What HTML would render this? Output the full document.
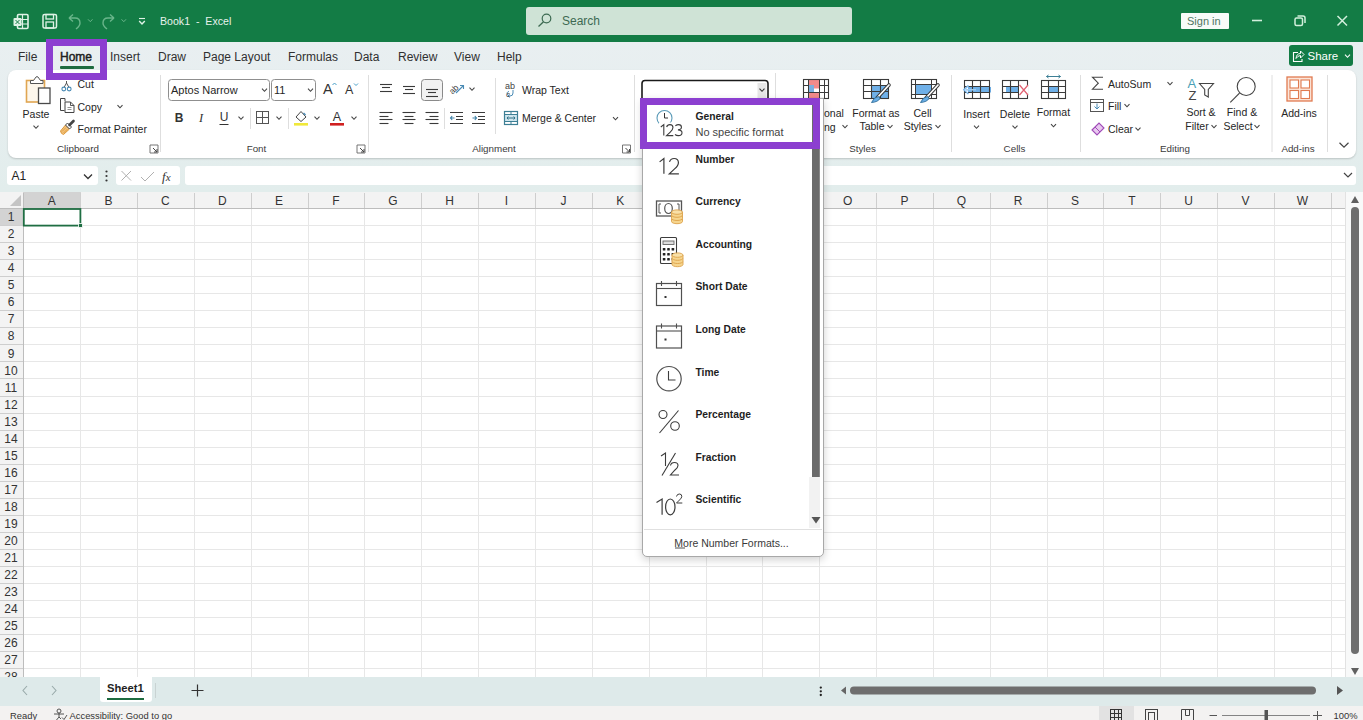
<!DOCTYPE html>
<html><head><meta charset="utf-8">
<style>
*{margin:0;padding:0;box-sizing:border-box}
html,body{width:1363px;height:720px;overflow:hidden;background:linear-gradient(#e9eff1 42px,#e2edec 190px);font-family:"Liberation Sans",sans-serif;color:#262626}
.a{position:absolute}
.t{position:absolute;white-space:nowrap;line-height:1}
svg{position:absolute;overflow:visible}
#title{left:0;top:0;width:1363px;height:42px;background:#137c45}
#tabs{left:0;top:42px;width:1363px;height:29px}
#ribbon{left:8px;top:70px;width:1348px;height:88px;background:#fff;border-radius:8px;box-shadow:0 1px 2px rgba(0,0,0,0.18)}
.sep{position:absolute;width:1px;background:#dcdcdc}
.rt{font-size:10.5px;color:#262626}
.gl{font-size:10px;color:#3a3a3a}
.dd{position:absolute;width:6px;height:4px}
</style></head><body>
<!-- TITLE BAR -->
<div id="title" class="a">
  <div class="a" style="left:526px;top:7px;width:326px;height:28px;background:#cfe3d6;border-radius:3px"></div>
  <div class="t" style="left:562px;top:15px;font-size:12px;color:#3d6a52">Search</div>
  <div class="t" style="left:160px;top:16px;font-size:10.6px;color:#e8f2ec">Book1&nbsp; - &nbsp;Excel</div>
  <div class="a" style="left:1180.5px;top:12.8px;width:48.3px;height:16.5px;background:#f7fbf8;border-radius:1px"></div>
  <div class="t" style="left:1187px;top:15.5px;font-size:11px;color:#4f7562">Sign in</div>
</div>
<!-- TABS -->
<div id="tabs" class="a">
  <div class="t" style="left:18px;top:9px;font-size:12px;color:#303030">File</div>
  <div class="t" style="left:60px;top:9px;font-size:12px;color:#202020;-webkit-text-stroke:0.45px #202020">Home</div>
  <div class="a" style="left:60px;top:24px;width:34px;height:3px;background:#1d6b3f;border-radius:1px"></div>
  <div class="t" style="left:110px;top:9px;font-size:12px;color:#303030">Insert</div>
  <div class="t" style="left:158px;top:9px;font-size:12px;color:#303030">Draw</div>
  <div class="t" style="left:203px;top:9px;font-size:12px;color:#303030">Page Layout</div>
  <div class="t" style="left:288px;top:9px;font-size:12px;color:#303030">Formulas</div>
  <div class="t" style="left:354px;top:9px;font-size:12px;color:#303030">Data</div>
  <div class="t" style="left:398px;top:9px;font-size:12px;color:#303030">Review</div>
  <div class="t" style="left:454px;top:9px;font-size:12px;color:#303030">View</div>
  <div class="t" style="left:497px;top:9px;font-size:12px;color:#303030">Help</div>
  <div class="a" style="left:1289px;top:3px;width:64px;height:21px;background:#137c45;border-radius:3px"></div>
  <div class="t" style="left:1307.5px;top:8.5px;font-size:11.5px;color:#fff">Share</div>
</div>
<!-- RIBBON -->
<div id="ribbon" class="a"></div>
<svg class="a" style="left:0;top:0" width="1363" height="720"><rect x="26.5" y="80.5" width="18" height="21.5" fill="#fdf7ec" stroke="#e0a652" stroke-width="1.6"/><path d="M30.5,83.5 L30.5,80.5 L33.5,80.5 L36,77 Q37,76.2 38,77 L40.5,80.5 L43,80.5 L43,83.5 Z" fill="#fff" stroke="#555" stroke-width="1"/><rect x="38.5" y="88" width="11.5" height="15.5" fill="#fff" stroke="#4a4a4a" stroke-width="1.3"/><polyline points="33.5,125.7 36.0,128.3 38.5,125.7" fill="none" stroke="#444" stroke-width="1.1"/><path d="M66.5,81 L66.5,83 L64,87.5 M66.5,83 L69,87.5" stroke="#555" stroke-width="1" fill="none"/><circle cx="63.8" cy="89" r="1.9" fill="none" stroke="#4a8bb5" stroke-width="1.1"/><circle cx="69.2" cy="89" r="1.9" fill="none" stroke="#4a8bb5" stroke-width="1.1"/><path d="M64.5,110.5 L60.5,110.5 L60.5,98.5 L65,98.5 L65,101.5" fill="none" stroke="#444" stroke-width="1"/><path d="M65,102 L70.5,102 L74,105.5 L74,112.5 L65,112.5 Z" fill="#fff" stroke="#444" stroke-width="1"/><path d="M70.5,102 V105.5 H74" fill="none" stroke="#444" stroke-width="0.9"/><path d="M67.5,107.5 h4 M67.5,109.5 h4" stroke="#777" stroke-width="0.8"/><polyline points="117.5,105.2 120.0,107.8 122.5,105.2" fill="none" stroke="#444" stroke-width="1.1"/><path d="M60.5,131 L65.5,125 L69.5,129 L63.5,134.5 Q61,134 60.5,131 Z" fill="#f3c27a" stroke="#d7902e" stroke-width="0.9"/><path d="M62,131.5 L66,127.5 M63.5,133 L67.5,129" stroke="#d7902e" stroke-width="0.7"/><path d="M65.5,125 L67.5,123 L71.5,127 L69.5,129 Z" fill="#fff" stroke="#444" stroke-width="1"/><path d="M69.5,125 L73.5,121" stroke="#444" stroke-width="2.6" stroke-linecap="round"/><path d="M150,153 L150,145 L158,145 L158,153 Z" fill="none" stroke="#666" stroke-width="0.9" stroke-dasharray="none"/><path d="M153,148 L157,152 M157,149 L157,152 L154,152" fill="none" stroke="#444" stroke-width="1"/><line x1="160.5" y1="75" x2="160.5" y2="152" stroke="#dedede" stroke-width="1"/><rect x="168.5" y="79.5" width="101" height="21" rx="3" fill="#fff" stroke="#8f8f8f" stroke-width="1"/><rect x="271.5" y="79.5" width="44" height="21" rx="3" fill="#fff" stroke="#8f8f8f" stroke-width="1"/><polyline points="262.0,88.7 264.5,91.3 267.0,88.7" fill="none" stroke="#444" stroke-width="1.1"/><polyline points="308.0,88.7 310.5,91.3 313.0,88.7" fill="none" stroke="#444" stroke-width="1.1"/><polyline points="332.5,85 334.5,83 336.5,85" fill="none" stroke="#4aa0c8" stroke-width="1"/><polyline points="354,83.5 356,85.5 358,83.5" fill="none" stroke="#4aa0c8" stroke-width="1"/><line x1="219.5" y1="124.5" x2="228.5" y2="124.5" stroke="#333" stroke-width="1"/><polyline points="238.5,116.7 241.0,119.3 243.5,116.7" fill="none" stroke="#444" stroke-width="1.1"/><line x1="250.5" y1="108" x2="250.5" y2="129" stroke="#dedede" stroke-width="1"/><rect x="256.5" y="111.5" width="12" height="12" fill="none" stroke="#555" stroke-width="1"/><path d="M262.5,111.5 V123.5 M256.5,117.5 H268.5" stroke="#555" stroke-width="1"/><polyline points="276.5,116.7 279.0,119.3 281.5,116.7" fill="none" stroke="#444" stroke-width="1.1"/><line x1="288.5" y1="108" x2="288.5" y2="129" stroke="#dedede" stroke-width="1"/><path d="M296,117 L301,111.5 L306,117 L301,121.5 Z" fill="#fff" stroke="#444" stroke-width="1"/><path d="M303.5,113 L305.5,115" stroke="#4a8bb5" stroke-width="1.5"/><rect x="294" y="123" width="14" height="2.6" fill="#f0e83a"/><polyline points="314.5,116.7 317.0,119.3 319.5,116.7" fill="none" stroke="#444" stroke-width="1.1"/><rect x="330" y="123" width="14" height="2.6" fill="#d02020"/><polyline points="351.5,116.7 354.0,119.3 356.5,116.7" fill="none" stroke="#444" stroke-width="1.1"/><path d="M357,153 L357,145 L365,145 L365,153 Z" fill="none" stroke="#666" stroke-width="0.9" stroke-dasharray="none"/><path d="M360,148 L364,152 M364,149 L364,152 L361,152" fill="none" stroke="#444" stroke-width="1"/><line x1="368.5" y1="75" x2="368.5" y2="152" stroke="#dedede" stroke-width="1"/><line x1="380.0" y1="84.5" x2="392.0" y2="84.5" stroke="#3a3a3a" stroke-width="1.1"/><line x1="382.0" y1="87.5" x2="390.0" y2="87.5" stroke="#3a3a3a" stroke-width="1.1"/><line x1="380.0" y1="91.5" x2="392.0" y2="91.5" stroke="#3a3a3a" stroke-width="1.1"/><line x1="403.0" y1="86.5" x2="415.0" y2="86.5" stroke="#3a3a3a" stroke-width="1.1"/><line x1="405.0" y1="89.5" x2="413.0" y2="89.5" stroke="#3a3a3a" stroke-width="1.1"/><line x1="403.0" y1="93.5" x2="415.0" y2="93.5" stroke="#3a3a3a" stroke-width="1.1"/><rect x="421.5" y="79.5" width="21" height="21" rx="3" fill="#f2f2f2" stroke="#8a8a8a" stroke-width="1"/><line x1="426.0" y1="89.5" x2="438.0" y2="89.5" stroke="#3a3a3a" stroke-width="1.1"/><line x1="428.0" y1="92.5" x2="436.0" y2="92.5" stroke="#3a3a3a" stroke-width="1.1"/><line x1="426.0" y1="96.5" x2="438.0" y2="96.5" stroke="#3a3a3a" stroke-width="1.1"/><path d="M456,93 L463.5,85.5 M460,85.5 H463.5 V89" fill="none" stroke="#4a8bb5" stroke-width="1.1"/><polyline points="469.5,87.7 472.0,90.3 474.5,87.7" fill="none" stroke="#444" stroke-width="1.1"/><line x1="379.5" y1="112.5" x2="392.5" y2="112.5" stroke="#3a3a3a" stroke-width="1.1"/><line x1="379.5" y1="116.5" x2="388.5" y2="116.5" stroke="#3a3a3a" stroke-width="1.1"/><line x1="379.5" y1="119.5" x2="392.5" y2="119.5" stroke="#3a3a3a" stroke-width="1.1"/><line x1="379.5" y1="123.5" x2="388.5" y2="123.5" stroke="#3a3a3a" stroke-width="1.1"/><line x1="402.5" y1="112.5" x2="415.5" y2="112.5" stroke="#3a3a3a" stroke-width="1.1"/><line x1="404.5" y1="116.5" x2="413.5" y2="116.5" stroke="#3a3a3a" stroke-width="1.1"/><line x1="402.5" y1="119.5" x2="415.5" y2="119.5" stroke="#3a3a3a" stroke-width="1.1"/><line x1="404.5" y1="123.5" x2="413.5" y2="123.5" stroke="#3a3a3a" stroke-width="1.1"/><line x1="425.5" y1="112.5" x2="438.5" y2="112.5" stroke="#3a3a3a" stroke-width="1.1"/><line x1="429.5" y1="116.5" x2="438.5" y2="116.5" stroke="#3a3a3a" stroke-width="1.1"/><line x1="425.5" y1="119.5" x2="438.5" y2="119.5" stroke="#3a3a3a" stroke-width="1.1"/><line x1="429.5" y1="123.5" x2="438.5" y2="123.5" stroke="#3a3a3a" stroke-width="1.1"/><line x1="444.5" y1="108" x2="444.5" y2="129" stroke="#dedede" stroke-width="1"/><path d="M450,112.5 H463 M456,116.5 H463 M456,119.5 H463 M450,123.5 H463" stroke="#3a3a3a" stroke-width="1.1"/><path d="M450.5,118 L454.5,118 M452.2,116 L450.5,118 L452.2,120" stroke="#3a7ea5" stroke-width="1.1" fill="none"/><path d="M472,112.5 H485 M478,116.5 H485 M478,119.5 H485 M472,123.5 H485" stroke="#3a3a3a" stroke-width="1.1"/><path d="M472.5,118 L476.5,118 M474.8,116 L476.5,118 L474.8,120" stroke="#3a7ea5" stroke-width="1.1" fill="none"/><line x1="495.5" y1="78" x2="495.5" y2="134" stroke="#dedede" stroke-width="1"/><path d="M508,95 Q506,92 509,91.5 M513,90 L513,93 Q513,96 510,96 L508,96 M509.5,94.5 L508,96 L509.5,97.5" fill="none" stroke="#4a8bb5" stroke-width="1"/><rect x="505" y="115" width="12" height="6" fill="#cfe6ee"/><rect x="504.5" y="111.5" width="13" height="13" fill="none" stroke="#3d7f95" stroke-width="1.2"/><path d="M504.5,114.5 H517.5 M504.5,121.5 H517.5 M511,111.5 V114.5 M511,121.5 V124.5" stroke="#3d7f95" stroke-width="1"/><path d="M507,118 H515 M508.3,116.5 L507,118 L508.3,119.5 M513.7,116.5 L515,118 L513.7,119.5" fill="none" stroke="#2d6f85" stroke-width="1"/><polyline points="613.0,117.2 615.5,119.8 618.0,117.2" fill="none" stroke="#444" stroke-width="1.1"/><path d="M622.5,153 L622.5,145 L630.5,145 L630.5,153 Z" fill="none" stroke="#666" stroke-width="0.9" stroke-dasharray="none"/><path d="M625.5,148 L629.5,152 M629.5,149 L629.5,152 L626.5,152" fill="none" stroke="#444" stroke-width="1"/><line x1="634.5" y1="75" x2="634.5" y2="152" stroke="#dedede" stroke-width="1"/><rect x="642" y="80.5" width="126" height="22" rx="3" fill="#fff" stroke="#1a1a1a" stroke-width="1.6"/><rect x="757.5" y="83" width="9" height="15" fill="#e6e6e6"/><polyline points="759.5,88.7 762.0,91.3 764.5,88.7" fill="none" stroke="#333" stroke-width="1.1"/><line x1="775.5" y1="73" x2="775.5" y2="98" stroke="#dedede" stroke-width="1"/><g><rect x="808.5" y="80" width="11.5" height="5" fill="#f28b8b"/><rect x="808.5" y="92" width="11.5" height="6.5" fill="#f28b8b"/><rect x="809" y="85" width="5" height="7" fill="#7ab0e0"/><rect x="814" y="85" width="6" height="3.5" fill="#f28b8b"/><rect x="803.5" y="79.5" width="25" height="19" fill="none" stroke="#3a3a3a" stroke-width="1.1"/><path d="M803.5,85.5 H808.5 M819.5,85.5 H828.5 M803.5,92.5 H828.5 M808.5,79.5 V98.5 M819.5,79.5 V98.5 M824.5,79.5 V98.5" stroke="#3a3a3a" stroke-width="1"/></g><polyline points="842.5,125.2 845.0,127.8 847.5,125.2" fill="none" stroke="#444" stroke-width="1.1"/><rect x="871.5" y="86" width="17" height="12" fill="#6fb0e8"/><rect x="863.5" y="79.5" width="25" height="19" fill="none" stroke="#3a3a3a" stroke-width="1.1"/><path d="M863.5,85.5 H888.5 M863.5,91.5 H888.5 M871.5,79.5 V98.5 M880.5,79.5 V98.5" stroke="#3a3a3a" stroke-width="1.1"/><path d="M889,85 L877,98" stroke="#3a3a3a" stroke-width="3.6" stroke-linecap="round"/><path d="M889,85 L877,98" stroke="#fff" stroke-width="1.7" stroke-linecap="round"/><path d="M878.5,96.5 Q874,97 871.5,102.5 Q878,102 880,98.5 Z" fill="#6aaee6" stroke="#2f6d99" stroke-width="0.9"/><polyline points="887.5,125.2 890.0,127.8 892.5,125.2" fill="none" stroke="#444" stroke-width="1.1"/><rect x="915" y="84.5" width="16" height="10.5" fill="#6fb0e8"/><rect x="911.5" y="79.5" width="25" height="19" fill="none" stroke="#3a3a3a" stroke-width="1.1"/><path d="M911.5,84.5 H936.5 M915.5,79.5 V98.5 M931.5,79.5 V98.5 M911.5,94.5 H936.5" stroke="#3a3a3a" stroke-width="1"/><path d="M938,85 L926,98" stroke="#3a3a3a" stroke-width="3.6" stroke-linecap="round"/><path d="M938,85 L926,98" stroke="#fff" stroke-width="1.7" stroke-linecap="round"/><path d="M927.5,96.5 Q923,97 920.5,102.5 Q927,102 929,98.5 Z" fill="#6aaee6" stroke="#2f6d99" stroke-width="0.9"/><polyline points="935.5,125.2 938.0,127.8 940.5,125.2" fill="none" stroke="#444" stroke-width="1.1"/><line x1="951.5" y1="75" x2="951.5" y2="152" stroke="#dedede" stroke-width="1"/><rect x="968" y="87" width="23" height="5.5" fill="#6fb0e8"/><rect x="964.5" y="80.5" width="25" height="18" fill="none" stroke="#3a3a3a" stroke-width="1.1"/><path d="M964.5,86.5 H989.5 M964.5,92.5 H989.5 M972.5,80.5 V98.5 M980.5,80.5 V98.5" stroke="#3a3a3a" stroke-width="1.1"/><path d="M976,89.8 H964.5 M968.5,85.5 L964,89.8 L968.5,94" fill="none" stroke="#6fb0e8" stroke-width="1.6"/><path d="M976,89.8 H965 M968.5,86.2 L964.8,89.8 L968.5,93.4" fill="none" stroke="#eaf4fb" stroke-width="0.6"/><polyline points="974.0,125.7 976.5,128.3 979.0,125.7" fill="none" stroke="#444" stroke-width="1.1"/><rect x="1006" y="87" width="12" height="5.5" fill="#6fb0e8"/><path d="M1018,86.5 L1020.5,89.8 L1018,93" fill="#6fb0e8"/><rect x="1002.5" y="80.5" width="25" height="18" fill="none" stroke="#3a3a3a" stroke-width="1.1"/><path d="M1002.5,86.5 H1027.5 M1002.5,92.5 H1027.5 M1010.5,80.5 V98.5 M1018.5,80.5 V98.5" stroke="#3a3a3a" stroke-width="1.1"/><rect x="1019" y="86" width="9" height="8" fill="#fff"/><path d="M1019.5,85 L1028,95 M1028,85 L1019.5,95" stroke="#e06070" stroke-width="1.2"/><polyline points="1012.5,125.7 1015.0,128.3 1017.5,125.7" fill="none" stroke="#444" stroke-width="1.1"/><rect x="1049" y="87" width="9" height="5.5" fill="#6fb0e8"/><rect x="1041.5" y="80.5" width="24" height="18" fill="none" stroke="#3a3a3a" stroke-width="1.1"/><path d="M1041.5,86.5 H1065.5 M1041.5,92.5 H1065.5 M1048.5,80.5 V98.5 M1058.5,80.5 V98.5" stroke="#3a3a3a" stroke-width="1.1"/><path d="M1046.5,76.5 H1060.5 M1048.5,75 L1046.5,76.5 L1048.5,78 M1058.5,75 L1060.5,76.5 L1058.5,78" fill="none" stroke="#3d7f95" stroke-width="1"/><polyline points="1051.0,124.2 1053.5,126.8 1056.0,124.2" fill="none" stroke="#444" stroke-width="1.1"/><line x1="1080.5" y1="75" x2="1080.5" y2="152" stroke="#dedede" stroke-width="1"/><path d="M1103,77.2 H1092.5 L1098.3,83.2 L1092.5,89.2 H1103" fill="none" stroke="#444" stroke-width="1.1"/><polyline points="1167.5,82.2 1170.0,84.8 1172.5,82.2" fill="none" stroke="#444" stroke-width="1.1"/><rect x="1090.5" y="99.5" width="13" height="12" fill="#fff" stroke="#555" stroke-width="1"/><path d="M1090.5,102.5 H1103.5" stroke="#555" stroke-width="1"/><path d="M1097,103.5 V109 M1094.5,106.5 L1097,109 L1099.5,106.5" fill="none" stroke="#4a8bb5" stroke-width="1"/><polyline points="1124.5,104.2 1127.0,106.8 1129.5,104.2" fill="none" stroke="#444" stroke-width="1.1"/><path d="M1092,130 L1099,123 L1104,128 L1097,135 Z" fill="#e8c8ef" stroke="#a04ab8" stroke-width="1.1"/><path d="M1095,127 L1100,132" stroke="#a04ab8" stroke-width="1"/><polyline points="1135.5,127.7 1138.0,130.3 1140.5,127.7" fill="none" stroke="#444" stroke-width="1.1"/><path d="M1199.5,83.5 L1213.5,83.5 L1208.3,89.5 L1208.3,97 L1204.7,95 L1204.7,89.5 Z" fill="none" stroke="#444" stroke-width="1.1"/><polyline points="1211.5,125.2 1214.0,127.8 1216.5,125.2" fill="none" stroke="#444" stroke-width="1.1"/><circle cx="1246.2" cy="86.5" r="9" fill="none" stroke="#444" stroke-width="1.1"/><path d="M1239.5,93.2 L1230.3,102.4" stroke="#444" stroke-width="1.2"/><polyline points="1254.5,125.2 1257.0,127.8 1259.5,125.2" fill="none" stroke="#444" stroke-width="1.1"/><line x1="1272" y1="75" x2="1272" y2="152" stroke="#dedede" stroke-width="1"/><rect x="1287" y="77" width="25" height="24" fill="#fbe6da" stroke="#e07a50" stroke-width="1.3"/><rect x="1290" y="80" width="8.5" height="8" fill="#fff" stroke="#e07a50" stroke-width="1.1"/><rect x="1301" y="80" width="8.5" height="8" fill="#fff" stroke="#e07a50" stroke-width="1.1"/><rect x="1290" y="90.5" width="8.5" height="8" fill="#fff" stroke="#e07a50" stroke-width="1.1"/><rect x="1301" y="90.5" width="8.5" height="8" fill="#fff" stroke="#e07a50" stroke-width="1.1"/><line x1="1327.5" y1="75" x2="1327.5" y2="152" stroke="#dedede" stroke-width="1"/><polyline points="1339.5,142.8 1344.0,147.2 1348.5,142.8" fill="none" stroke="#444" stroke-width="1.2"/></svg>
<div class="t" style="left:-64.0px;top:109.2px;width:200px;text-align:center;font-size:10.5px;color:#262626;font-weight:normal;">Paste</div>
<div class="t" style="left:77.5px;top:79.2px;font-size:10.5px;color:#262626;font-weight:normal;">Cut</div>
<div class="t" style="left:77.5px;top:101.8px;font-size:10.5px;color:#262626;font-weight:normal;">Copy</div>
<div class="t" style="left:77.5px;top:123.8px;font-size:10.5px;color:#262626;font-weight:normal;">Format Painter</div>
<div class="t" style="left:-22.0px;top:144.1px;width:200px;text-align:center;font-size:9.8px;color:#3b3b3b;font-weight:normal;">Clipboard</div>
<div class="t" style="left:171.0px;top:85.0px;font-size:11px;color:#262626;font-weight:normal;">Aptos Narrow</div>
<div class="t" style="left:274.0px;top:85.0px;font-size:11px;color:#262626;font-weight:normal;">11</div>
<div class="t" style="left:323.0px;top:81.8px;font-size:14.5px;color:#333;font-weight:normal;">A</div>
<div class="t" style="left:345.0px;top:83.8px;font-size:12.5px;color:#333;font-weight:normal;">A</div>
<div class="t" style="left:79.0px;top:112.0px;width:200px;text-align:center;font-size:12px;color:#333;font-weight:bold;">B</div>
<div class="t" style="left:101.0px;top:111.8px;width:200px;text-align:center;font-size:12.5px;color:#333;font-weight:normal;font-style:italic;font-family:Liberation Serif,serif">I</div>
<div class="t" style="left:124.0px;top:111.0px;width:200px;text-align:center;font-size:12px;color:#333;font-weight:normal;">U</div>
<div class="t" style="left:237.0px;top:110.8px;width:200px;text-align:center;font-size:12.5px;color:#333;font-weight:normal;">A</div>
<div class="t" style="left:156.5px;top:144.1px;width:200px;text-align:center;font-size:9.8px;color:#3b3b3b;font-weight:normal;">Font</div>
<div class="t" style="left:447.5px;top:82.8px;font-size:8.5px;color:#444;font-weight:normal;transform:rotate(-45deg);transform-origin:8px 4px">ab</div>
<div class="t" style="left:505.0px;top:81.5px;font-size:9px;color:#444;font-weight:normal;">ab</div>
<div class="t" style="left:506.0px;top:90.5px;font-size:8px;color:#444;font-weight:normal;">c</div>
<div class="t" style="left:522.0px;top:85.2px;font-size:10.5px;color:#262626;font-weight:normal;">Wrap Text</div>
<div class="t" style="left:522.0px;top:113.2px;font-size:10.5px;color:#262626;font-weight:normal;">Merge &amp; Center</div>
<div class="t" style="left:394.0px;top:144.1px;width:200px;text-align:center;font-size:9.8px;color:#3b3b3b;font-weight:normal;">Alignment</div>
<div class="t" style="left:824.0px;top:107.8px;font-size:10.5px;color:#262626;font-weight:normal;">onal</div>
<div class="t" style="left:824.0px;top:121.8px;font-size:10.5px;color:#262626;font-weight:normal;">ng</div>
<div class="t" style="left:776.0px;top:107.8px;width:200px;text-align:center;font-size:10.5px;color:#262626;font-weight:normal;">Format as</div>
<div class="t" style="left:772.0px;top:121.2px;width:200px;text-align:center;font-size:10.5px;color:#262626;font-weight:normal;">Table</div>
<div class="t" style="left:822.5px;top:107.8px;width:200px;text-align:center;font-size:10.5px;color:#262626;font-weight:normal;">Cell</div>
<div class="t" style="left:818.0px;top:121.2px;width:200px;text-align:center;font-size:10.5px;color:#262626;font-weight:normal;">Styles</div>
<div class="t" style="left:762.5px;top:144.1px;width:200px;text-align:center;font-size:9.8px;color:#3b3b3b;font-weight:normal;">Styles</div>
<div class="t" style="left:876.5px;top:108.8px;width:200px;text-align:center;font-size:10.5px;color:#262626;font-weight:normal;">Insert</div>
<div class="t" style="left:915.0px;top:108.8px;width:200px;text-align:center;font-size:10.5px;color:#262626;font-weight:normal;">Delete</div>
<div class="t" style="left:953.5px;top:107.2px;width:200px;text-align:center;font-size:10.5px;color:#262626;font-weight:normal;">Format</div>
<div class="t" style="left:914.5px;top:144.1px;width:200px;text-align:center;font-size:9.8px;color:#3b3b3b;font-weight:normal;">Cells</div>
<div class="t" style="left:1108.0px;top:78.8px;font-size:10.5px;color:#262626;font-weight:normal;">AutoSum</div>
<div class="t" style="left:1108.0px;top:100.8px;font-size:10.5px;color:#262626;font-weight:normal;">Fill</div>
<div class="t" style="left:1108.0px;top:123.8px;font-size:10.5px;color:#262626;font-weight:normal;">Clear</div>
<div class="t" style="left:1187.5px;top:76.7px;font-size:13px;color:#4a9fb5;font-weight:normal;">A</div>
<div class="t" style="left:1188.5px;top:89.1px;font-size:13px;color:#444;font-weight:normal;">Z</div>
<div class="t" style="left:1101.0px;top:107.2px;width:200px;text-align:center;font-size:10.5px;color:#262626;font-weight:normal;">Sort &amp;</div>
<div class="t" style="left:1097.0px;top:121.2px;width:200px;text-align:center;font-size:10.5px;color:#262626;font-weight:normal;">Filter</div>
<div class="t" style="left:1142.0px;top:107.2px;width:200px;text-align:center;font-size:10.5px;color:#262626;font-weight:normal;">Find &amp;</div>
<div class="t" style="left:1138.0px;top:121.2px;width:200px;text-align:center;font-size:10.5px;color:#262626;font-weight:normal;">Select</div>
<div class="t" style="left:1075.0px;top:144.1px;width:200px;text-align:center;font-size:9.8px;color:#3b3b3b;font-weight:normal;">Editing</div>
<div class="t" style="left:1199.0px;top:107.8px;width:200px;text-align:center;font-size:10.5px;color:#262626;font-weight:normal;">Add-ins</div>
<div class="t" style="left:1198.0px;top:144.1px;width:200px;text-align:center;font-size:9.8px;color:#3b3b3b;font-weight:normal;">Add-ins</div>
<!-- FORMULA BAR -->
<div class="a" style="left:7px;top:166px;width:91px;height:19px;background:#fff;border-radius:3px"></div>
<div class="t" style="left:11.5px;top:169.5px;font-size:12px;color:#222">A1</div>
<div class="a" style="left:116px;top:166px;width:64px;height:19px;background:#fff;border-radius:3px"></div>
<div class="a" style="left:185px;top:166px;width:1171px;height:19px;background:#fff;border-radius:3px"></div>
<!-- <div class="a" style="left:0;top:192px;width:1345px;height:16px;background:#f3f3f3"></div>
<div class="a" style="left:0;top:208px;width:23px;height:469px;background:#f3f3f3"></div>
<div class="a" style="left:23px;top:208px;width:1322px;height:469px;background:#fff"></div>
<div class="a" style="left:23px;top:192px;width:57.5px;height:16px;background:#d3d3d3"></div>
<div class="a" style="left:0;top:208px;width:23px;height:17px;background:#d3d3d3"></div>
<svg class="a" style="left:0;top:0" width="1363" height="720" viewBox="0 0 1363 720">
<line x1="80.50" y1="208" x2="80.50" y2="677" stroke="#e7e7e7" stroke-width="1"/>
<line x1="80.50" y1="193" x2="80.50" y2="208" stroke="#cecece" stroke-width="1"/>
<line x1="137.50" y1="208" x2="137.50" y2="677" stroke="#e7e7e7" stroke-width="1"/>
<line x1="137.50" y1="193" x2="137.50" y2="208" stroke="#cecece" stroke-width="1"/>
<line x1="194.50" y1="208" x2="194.50" y2="677" stroke="#e7e7e7" stroke-width="1"/>
<line x1="194.50" y1="193" x2="194.50" y2="208" stroke="#cecece" stroke-width="1"/>
<line x1="251.50" y1="208" x2="251.50" y2="677" stroke="#e7e7e7" stroke-width="1"/>
<line x1="251.50" y1="193" x2="251.50" y2="208" stroke="#cecece" stroke-width="1"/>
<line x1="308.50" y1="208" x2="308.50" y2="677" stroke="#e7e7e7" stroke-width="1"/>
<line x1="308.50" y1="193" x2="308.50" y2="208" stroke="#cecece" stroke-width="1"/>
<line x1="364.50" y1="208" x2="364.50" y2="677" stroke="#e7e7e7" stroke-width="1"/>
<line x1="364.50" y1="193" x2="364.50" y2="208" stroke="#cecece" stroke-width="1"/>
<line x1="421.50" y1="208" x2="421.50" y2="677" stroke="#e7e7e7" stroke-width="1"/>
<line x1="421.50" y1="193" x2="421.50" y2="208" stroke="#cecece" stroke-width="1"/>
<line x1="478.50" y1="208" x2="478.50" y2="677" stroke="#e7e7e7" stroke-width="1"/>
<line x1="478.50" y1="193" x2="478.50" y2="208" stroke="#cecece" stroke-width="1"/>
<line x1="535.50" y1="208" x2="535.50" y2="677" stroke="#e7e7e7" stroke-width="1"/>
<line x1="535.50" y1="193" x2="535.50" y2="208" stroke="#cecece" stroke-width="1"/>
<line x1="592.50" y1="208" x2="592.50" y2="677" stroke="#e7e7e7" stroke-width="1"/>
<line x1="592.50" y1="193" x2="592.50" y2="208" stroke="#cecece" stroke-width="1"/>
<line x1="649.50" y1="208" x2="649.50" y2="677" stroke="#e7e7e7" stroke-width="1"/>
<line x1="649.50" y1="193" x2="649.50" y2="208" stroke="#cecece" stroke-width="1"/>
<line x1="706.50" y1="208" x2="706.50" y2="677" stroke="#e7e7e7" stroke-width="1"/>
<line x1="706.50" y1="193" x2="706.50" y2="208" stroke="#cecece" stroke-width="1"/>
<line x1="762.50" y1="208" x2="762.50" y2="677" stroke="#e7e7e7" stroke-width="1"/>
<line x1="762.50" y1="193" x2="762.50" y2="208" stroke="#cecece" stroke-width="1"/>
<line x1="819.50" y1="208" x2="819.50" y2="677" stroke="#e7e7e7" stroke-width="1"/>
<line x1="819.50" y1="193" x2="819.50" y2="208" stroke="#cecece" stroke-width="1"/>
<line x1="876.50" y1="208" x2="876.50" y2="677" stroke="#e7e7e7" stroke-width="1"/>
<line x1="876.50" y1="193" x2="876.50" y2="208" stroke="#cecece" stroke-width="1"/>
<line x1="933.50" y1="208" x2="933.50" y2="677" stroke="#e7e7e7" stroke-width="1"/>
<line x1="933.50" y1="193" x2="933.50" y2="208" stroke="#cecece" stroke-width="1"/>
<line x1="990.50" y1="208" x2="990.50" y2="677" stroke="#e7e7e7" stroke-width="1"/>
<line x1="990.50" y1="193" x2="990.50" y2="208" stroke="#cecece" stroke-width="1"/>
<line x1="1047.50" y1="208" x2="1047.50" y2="677" stroke="#e7e7e7" stroke-width="1"/>
<line x1="1047.50" y1="193" x2="1047.50" y2="208" stroke="#cecece" stroke-width="1"/>
<line x1="1103.50" y1="208" x2="1103.50" y2="677" stroke="#e7e7e7" stroke-width="1"/>
<line x1="1103.50" y1="193" x2="1103.50" y2="208" stroke="#cecece" stroke-width="1"/>
<line x1="1160.50" y1="208" x2="1160.50" y2="677" stroke="#e7e7e7" stroke-width="1"/>
<line x1="1160.50" y1="193" x2="1160.50" y2="208" stroke="#cecece" stroke-width="1"/>
<line x1="1217.50" y1="208" x2="1217.50" y2="677" stroke="#e7e7e7" stroke-width="1"/>
<line x1="1217.50" y1="193" x2="1217.50" y2="208" stroke="#cecece" stroke-width="1"/>
<line x1="1274.50" y1="208" x2="1274.50" y2="677" stroke="#e7e7e7" stroke-width="1"/>
<line x1="1274.50" y1="193" x2="1274.50" y2="208" stroke="#cecece" stroke-width="1"/>
<line x1="1331.50" y1="208" x2="1331.50" y2="677" stroke="#e7e7e7" stroke-width="1"/>
<line x1="1331.50" y1="193" x2="1331.50" y2="208" stroke="#cecece" stroke-width="1"/>
<line x1="23" y1="225.50" x2="1345" y2="225.50" stroke="#e7e7e7" stroke-width="1"/>
<line x1="0" y1="225.50" x2="23" y2="225.50" stroke="#cecece" stroke-width="1"/>
<line x1="23" y1="242.50" x2="1345" y2="242.50" stroke="#e7e7e7" stroke-width="1"/>
<line x1="0" y1="242.50" x2="23" y2="242.50" stroke="#cecece" stroke-width="1"/>
<line x1="23" y1="259.50" x2="1345" y2="259.50" stroke="#e7e7e7" stroke-width="1"/>
<line x1="0" y1="259.50" x2="23" y2="259.50" stroke="#cecece" stroke-width="1"/>
<line x1="23" y1="276.50" x2="1345" y2="276.50" stroke="#e7e7e7" stroke-width="1"/>
<line x1="0" y1="276.50" x2="23" y2="276.50" stroke="#cecece" stroke-width="1"/>
<line x1="23" y1="293.50" x2="1345" y2="293.50" stroke="#e7e7e7" stroke-width="1"/>
<line x1="0" y1="293.50" x2="23" y2="293.50" stroke="#cecece" stroke-width="1"/>
<line x1="23" y1="310.50" x2="1345" y2="310.50" stroke="#e7e7e7" stroke-width="1"/>
<line x1="0" y1="310.50" x2="23" y2="310.50" stroke="#cecece" stroke-width="1"/>
<line x1="23" y1="327.50" x2="1345" y2="327.50" stroke="#e7e7e7" stroke-width="1"/>
<line x1="0" y1="327.50" x2="23" y2="327.50" stroke="#cecece" stroke-width="1"/>
<line x1="23" y1="344.50" x2="1345" y2="344.50" stroke="#e7e7e7" stroke-width="1"/>
<line x1="0" y1="344.50" x2="23" y2="344.50" stroke="#cecece" stroke-width="1"/>
<line x1="23" y1="361.50" x2="1345" y2="361.50" stroke="#e7e7e7" stroke-width="1"/>
<line x1="0" y1="361.50" x2="23" y2="361.50" stroke="#cecece" stroke-width="1"/>
<line x1="23" y1="378.50" x2="1345" y2="378.50" stroke="#e7e7e7" stroke-width="1"/>
<line x1="0" y1="378.50" x2="23" y2="378.50" stroke="#cecece" stroke-width="1"/>
<line x1="23" y1="396.50" x2="1345" y2="396.50" stroke="#e7e7e7" stroke-width="1"/>
<line x1="0" y1="396.50" x2="23" y2="396.50" stroke="#cecece" stroke-width="1"/>
<line x1="23" y1="413.50" x2="1345" y2="413.50" stroke="#e7e7e7" stroke-width="1"/>
<line x1="0" y1="413.50" x2="23" y2="413.50" stroke="#cecece" stroke-width="1"/>
<line x1="23" y1="430.50" x2="1345" y2="430.50" stroke="#e7e7e7" stroke-width="1"/>
<line x1="0" y1="430.50" x2="23" y2="430.50" stroke="#cecece" stroke-width="1"/>
<line x1="23" y1="447.50" x2="1345" y2="447.50" stroke="#e7e7e7" stroke-width="1"/>
<line x1="0" y1="447.50" x2="23" y2="447.50" stroke="#cecece" stroke-width="1"/>
<line x1="23" y1="464.50" x2="1345" y2="464.50" stroke="#e7e7e7" stroke-width="1"/>
<line x1="0" y1="464.50" x2="23" y2="464.50" stroke="#cecece" stroke-width="1"/>
<line x1="23" y1="481.50" x2="1345" y2="481.50" stroke="#e7e7e7" stroke-width="1"/>
<line x1="0" y1="481.50" x2="23" y2="481.50" stroke="#cecece" stroke-width="1"/>
<line x1="23" y1="498.50" x2="1345" y2="498.50" stroke="#e7e7e7" stroke-width="1"/>
<line x1="0" y1="498.50" x2="23" y2="498.50" stroke="#cecece" stroke-width="1"/>
<line x1="23" y1="515.50" x2="1345" y2="515.50" stroke="#e7e7e7" stroke-width="1"/>
<line x1="0" y1="515.50" x2="23" y2="515.50" stroke="#cecece" stroke-width="1"/>
<line x1="23" y1="532.50" x2="1345" y2="532.50" stroke="#e7e7e7" stroke-width="1"/>
<line x1="0" y1="532.50" x2="23" y2="532.50" stroke="#cecece" stroke-width="1"/>
<line x1="23" y1="549.50" x2="1345" y2="549.50" stroke="#e7e7e7" stroke-width="1"/>
<line x1="0" y1="549.50" x2="23" y2="549.50" stroke="#cecece" stroke-width="1"/>
<line x1="23" y1="566.50" x2="1345" y2="566.50" stroke="#e7e7e7" stroke-width="1"/>
<line x1="0" y1="566.50" x2="23" y2="566.50" stroke="#cecece" stroke-width="1"/>
<line x1="23" y1="583.50" x2="1345" y2="583.50" stroke="#e7e7e7" stroke-width="1"/>
<line x1="0" y1="583.50" x2="23" y2="583.50" stroke="#cecece" stroke-width="1"/>
<line x1="23" y1="600.50" x2="1345" y2="600.50" stroke="#e7e7e7" stroke-width="1"/>
<line x1="0" y1="600.50" x2="23" y2="600.50" stroke="#cecece" stroke-width="1"/>
<line x1="23" y1="617.50" x2="1345" y2="617.50" stroke="#e7e7e7" stroke-width="1"/>
<line x1="0" y1="617.50" x2="23" y2="617.50" stroke="#cecece" stroke-width="1"/>
<line x1="23" y1="634.50" x2="1345" y2="634.50" stroke="#e7e7e7" stroke-width="1"/>
<line x1="0" y1="634.50" x2="23" y2="634.50" stroke="#cecece" stroke-width="1"/>
<line x1="23" y1="651.50" x2="1345" y2="651.50" stroke="#e7e7e7" stroke-width="1"/>
<line x1="0" y1="651.50" x2="23" y2="651.50" stroke="#cecece" stroke-width="1"/>
<line x1="23" y1="668.50" x2="1345" y2="668.50" stroke="#e7e7e7" stroke-width="1"/>
<line x1="0" y1="668.50" x2="23" y2="668.50" stroke="#cecece" stroke-width="1"/>
<line x1="0" y1="208.5" x2="1345" y2="208.5" stroke="#bdbdbd" stroke-width="1"/>
<line x1="23.5" y1="193" x2="23.5" y2="677" stroke="#bdbdbd" stroke-width="1"/>
<polygon points="10,206 21,206 21,195" fill="#c4c4c4"/>
<rect x="23.8" y="209" width="56.6" height="16.6" fill="none" stroke="#1f6e43" stroke-width="1.8"/>
<rect x="78.5" y="223.5" width="4" height="4" fill="#1f6e43" stroke="#fff" stroke-width="0.8"/>
</svg>
<div class="t" style="left:31.7px;top:195px;width:40px;text-align:center;font-size:12px;color:#333">A</div>
<div class="t" style="left:88.6px;top:195px;width:40px;text-align:center;font-size:12px;color:#333">B</div>
<div class="t" style="left:145.4px;top:195px;width:40px;text-align:center;font-size:12px;color:#333">C</div>
<div class="t" style="left:202.3px;top:195px;width:40px;text-align:center;font-size:12px;color:#333">D</div>
<div class="t" style="left:259.1px;top:195px;width:40px;text-align:center;font-size:12px;color:#333">E</div>
<div class="t" style="left:316.0px;top:195px;width:40px;text-align:center;font-size:12px;color:#333">F</div>
<div class="t" style="left:372.8px;top:195px;width:40px;text-align:center;font-size:12px;color:#333">G</div>
<div class="t" style="left:429.7px;top:195px;width:40px;text-align:center;font-size:12px;color:#333">H</div>
<div class="t" style="left:486.5px;top:195px;width:40px;text-align:center;font-size:12px;color:#333">I</div>
<div class="t" style="left:543.4px;top:195px;width:40px;text-align:center;font-size:12px;color:#333">J</div>
<div class="t" style="left:600.2px;top:195px;width:40px;text-align:center;font-size:12px;color:#333">K</div>
<div class="t" style="left:657.1px;top:195px;width:40px;text-align:center;font-size:12px;color:#333">L</div>
<div class="t" style="left:713.9px;top:195px;width:40px;text-align:center;font-size:12px;color:#333">M</div>
<div class="t" style="left:770.8px;top:195px;width:40px;text-align:center;font-size:12px;color:#333">N</div>
<div class="t" style="left:827.6px;top:195px;width:40px;text-align:center;font-size:12px;color:#333">O</div>
<div class="t" style="left:884.5px;top:195px;width:40px;text-align:center;font-size:12px;color:#333">P</div>
<div class="t" style="left:941.3px;top:195px;width:40px;text-align:center;font-size:12px;color:#333">Q</div>
<div class="t" style="left:998.2px;top:195px;width:40px;text-align:center;font-size:12px;color:#333">R</div>
<div class="t" style="left:1055.0px;top:195px;width:40px;text-align:center;font-size:12px;color:#333">S</div>
<div class="t" style="left:1111.9px;top:195px;width:40px;text-align:center;font-size:12px;color:#333">T</div>
<div class="t" style="left:1168.7px;top:195px;width:40px;text-align:center;font-size:12px;color:#333">U</div>
<div class="t" style="left:1225.6px;top:195px;width:40px;text-align:center;font-size:12px;color:#333">V</div>
<div class="t" style="left:1282.4px;top:195px;width:40px;text-align:center;font-size:12px;color:#333">W</div>
<div class="t" style="left:0;top:211.2px;width:22px;text-align:center;font-size:12px;color:#333">1</div>
<div class="t" style="left:0;top:228.2px;width:22px;text-align:center;font-size:12px;color:#333">2</div>
<div class="t" style="left:0;top:245.3px;width:22px;text-align:center;font-size:12px;color:#333">3</div>
<div class="t" style="left:0;top:262.3px;width:22px;text-align:center;font-size:12px;color:#333">4</div>
<div class="t" style="left:0;top:279.3px;width:22px;text-align:center;font-size:12px;color:#333">5</div>
<div class="t" style="left:0;top:296.4px;width:22px;text-align:center;font-size:12px;color:#333">6</div>
<div class="t" style="left:0;top:313.4px;width:22px;text-align:center;font-size:12px;color:#333">7</div>
<div class="t" style="left:0;top:330.4px;width:22px;text-align:center;font-size:12px;color:#333">8</div>
<div class="t" style="left:0;top:347.5px;width:22px;text-align:center;font-size:12px;color:#333">9</div>
<div class="t" style="left:0;top:364.5px;width:22px;text-align:center;font-size:12px;color:#333">10</div>
<div class="t" style="left:0;top:381.5px;width:22px;text-align:center;font-size:12px;color:#333">11</div>
<div class="t" style="left:0;top:398.5px;width:22px;text-align:center;font-size:12px;color:#333">12</div>
<div class="t" style="left:0;top:415.6px;width:22px;text-align:center;font-size:12px;color:#333">13</div>
<div class="t" style="left:0;top:432.6px;width:22px;text-align:center;font-size:12px;color:#333">14</div>
<div class="t" style="left:0;top:449.6px;width:22px;text-align:center;font-size:12px;color:#333">15</div>
<div class="t" style="left:0;top:466.7px;width:22px;text-align:center;font-size:12px;color:#333">16</div>
<div class="t" style="left:0;top:483.7px;width:22px;text-align:center;font-size:12px;color:#333">17</div>
<div class="t" style="left:0;top:500.7px;width:22px;text-align:center;font-size:12px;color:#333">18</div>
<div class="t" style="left:0;top:517.8px;width:22px;text-align:center;font-size:12px;color:#333">19</div>
<div class="t" style="left:0;top:534.8px;width:22px;text-align:center;font-size:12px;color:#333">20</div>
<div class="t" style="left:0;top:551.8px;width:22px;text-align:center;font-size:12px;color:#333">21</div>
<div class="t" style="left:0;top:568.8px;width:22px;text-align:center;font-size:12px;color:#333">22</div>
<div class="t" style="left:0;top:585.9px;width:22px;text-align:center;font-size:12px;color:#333">23</div>
<div class="t" style="left:0;top:602.9px;width:22px;text-align:center;font-size:12px;color:#333">24</div>
<div class="t" style="left:0;top:619.9px;width:22px;text-align:center;font-size:12px;color:#333">25</div>
<div class="t" style="left:0;top:637.0px;width:22px;text-align:center;font-size:12px;color:#333">26</div>
<div class="t" style="left:0;top:654.0px;width:22px;text-align:center;font-size:12px;color:#333">27</div>
<div class="t" style="left:0;top:671.0px;width:22px;text-align:center;font-size:12px;color:#333">28</div>
<div class="a" style="left:1345px;top:192px;width:18px;height:485px;background:#f8f9f9;border-left:1px solid #e2e2e2"></div>
<div class="a" style="left:1351px;top:207px;width:7.5px;height:447px;background:#6e6e6e;border-radius:4px"></div>
<svg class="a" style="left:0;top:0" width="1363" height="720"><polygon points="1351,203 1359,203 1355,196" fill="#606060"/><polygon points="1351,668 1359,668 1355,675" fill="#606060"/></svg> -->
<div class="a" style="left:0;top:192px;width:1345px;height:16px;background:#f3f3f3"></div>
<div class="a" style="left:0;top:208px;width:23px;height:469px;background:#f3f3f3"></div>
<div class="a" style="left:23px;top:208px;width:1322px;height:469px;background:#fff"></div>
<div class="a" style="left:23px;top:192px;width:57.5px;height:16px;background:#d3d3d3"></div>
<div class="a" style="left:0;top:208px;width:23px;height:17px;background:#d3d3d3"></div>
<svg class="a" style="left:0;top:0" width="1363" height="720" viewBox="0 0 1363 720">
<line x1="80.50" y1="208" x2="80.50" y2="677" stroke="#e7e7e7" stroke-width="1"/>
<line x1="80.50" y1="193" x2="80.50" y2="208" stroke="#cecece" stroke-width="1"/>
<line x1="137.50" y1="208" x2="137.50" y2="677" stroke="#e7e7e7" stroke-width="1"/>
<line x1="137.50" y1="193" x2="137.50" y2="208" stroke="#cecece" stroke-width="1"/>
<line x1="194.50" y1="208" x2="194.50" y2="677" stroke="#e7e7e7" stroke-width="1"/>
<line x1="194.50" y1="193" x2="194.50" y2="208" stroke="#cecece" stroke-width="1"/>
<line x1="251.50" y1="208" x2="251.50" y2="677" stroke="#e7e7e7" stroke-width="1"/>
<line x1="251.50" y1="193" x2="251.50" y2="208" stroke="#cecece" stroke-width="1"/>
<line x1="308.50" y1="208" x2="308.50" y2="677" stroke="#e7e7e7" stroke-width="1"/>
<line x1="308.50" y1="193" x2="308.50" y2="208" stroke="#cecece" stroke-width="1"/>
<line x1="364.50" y1="208" x2="364.50" y2="677" stroke="#e7e7e7" stroke-width="1"/>
<line x1="364.50" y1="193" x2="364.50" y2="208" stroke="#cecece" stroke-width="1"/>
<line x1="421.50" y1="208" x2="421.50" y2="677" stroke="#e7e7e7" stroke-width="1"/>
<line x1="421.50" y1="193" x2="421.50" y2="208" stroke="#cecece" stroke-width="1"/>
<line x1="478.50" y1="208" x2="478.50" y2="677" stroke="#e7e7e7" stroke-width="1"/>
<line x1="478.50" y1="193" x2="478.50" y2="208" stroke="#cecece" stroke-width="1"/>
<line x1="535.50" y1="208" x2="535.50" y2="677" stroke="#e7e7e7" stroke-width="1"/>
<line x1="535.50" y1="193" x2="535.50" y2="208" stroke="#cecece" stroke-width="1"/>
<line x1="592.50" y1="208" x2="592.50" y2="677" stroke="#e7e7e7" stroke-width="1"/>
<line x1="592.50" y1="193" x2="592.50" y2="208" stroke="#cecece" stroke-width="1"/>
<line x1="649.50" y1="208" x2="649.50" y2="677" stroke="#e7e7e7" stroke-width="1"/>
<line x1="649.50" y1="193" x2="649.50" y2="208" stroke="#cecece" stroke-width="1"/>
<line x1="706.50" y1="208" x2="706.50" y2="677" stroke="#e7e7e7" stroke-width="1"/>
<line x1="706.50" y1="193" x2="706.50" y2="208" stroke="#cecece" stroke-width="1"/>
<line x1="762.50" y1="208" x2="762.50" y2="677" stroke="#e7e7e7" stroke-width="1"/>
<line x1="762.50" y1="193" x2="762.50" y2="208" stroke="#cecece" stroke-width="1"/>
<line x1="819.50" y1="208" x2="819.50" y2="677" stroke="#e7e7e7" stroke-width="1"/>
<line x1="819.50" y1="193" x2="819.50" y2="208" stroke="#cecece" stroke-width="1"/>
<line x1="876.50" y1="208" x2="876.50" y2="677" stroke="#e7e7e7" stroke-width="1"/>
<line x1="876.50" y1="193" x2="876.50" y2="208" stroke="#cecece" stroke-width="1"/>
<line x1="933.50" y1="208" x2="933.50" y2="677" stroke="#e7e7e7" stroke-width="1"/>
<line x1="933.50" y1="193" x2="933.50" y2="208" stroke="#cecece" stroke-width="1"/>
<line x1="990.50" y1="208" x2="990.50" y2="677" stroke="#e7e7e7" stroke-width="1"/>
<line x1="990.50" y1="193" x2="990.50" y2="208" stroke="#cecece" stroke-width="1"/>
<line x1="1047.50" y1="208" x2="1047.50" y2="677" stroke="#e7e7e7" stroke-width="1"/>
<line x1="1047.50" y1="193" x2="1047.50" y2="208" stroke="#cecece" stroke-width="1"/>
<line x1="1103.50" y1="208" x2="1103.50" y2="677" stroke="#e7e7e7" stroke-width="1"/>
<line x1="1103.50" y1="193" x2="1103.50" y2="208" stroke="#cecece" stroke-width="1"/>
<line x1="1160.50" y1="208" x2="1160.50" y2="677" stroke="#e7e7e7" stroke-width="1"/>
<line x1="1160.50" y1="193" x2="1160.50" y2="208" stroke="#cecece" stroke-width="1"/>
<line x1="1217.50" y1="208" x2="1217.50" y2="677" stroke="#e7e7e7" stroke-width="1"/>
<line x1="1217.50" y1="193" x2="1217.50" y2="208" stroke="#cecece" stroke-width="1"/>
<line x1="1274.50" y1="208" x2="1274.50" y2="677" stroke="#e7e7e7" stroke-width="1"/>
<line x1="1274.50" y1="193" x2="1274.50" y2="208" stroke="#cecece" stroke-width="1"/>
<line x1="1331.50" y1="208" x2="1331.50" y2="677" stroke="#e7e7e7" stroke-width="1"/>
<line x1="1331.50" y1="193" x2="1331.50" y2="208" stroke="#cecece" stroke-width="1"/>
<line x1="23" y1="225.50" x2="1345" y2="225.50" stroke="#e7e7e7" stroke-width="1"/>
<line x1="0" y1="225.50" x2="23" y2="225.50" stroke="#cecece" stroke-width="1"/>
<line x1="23" y1="242.50" x2="1345" y2="242.50" stroke="#e7e7e7" stroke-width="1"/>
<line x1="0" y1="242.50" x2="23" y2="242.50" stroke="#cecece" stroke-width="1"/>
<line x1="23" y1="259.50" x2="1345" y2="259.50" stroke="#e7e7e7" stroke-width="1"/>
<line x1="0" y1="259.50" x2="23" y2="259.50" stroke="#cecece" stroke-width="1"/>
<line x1="23" y1="276.50" x2="1345" y2="276.50" stroke="#e7e7e7" stroke-width="1"/>
<line x1="0" y1="276.50" x2="23" y2="276.50" stroke="#cecece" stroke-width="1"/>
<line x1="23" y1="293.50" x2="1345" y2="293.50" stroke="#e7e7e7" stroke-width="1"/>
<line x1="0" y1="293.50" x2="23" y2="293.50" stroke="#cecece" stroke-width="1"/>
<line x1="23" y1="310.50" x2="1345" y2="310.50" stroke="#e7e7e7" stroke-width="1"/>
<line x1="0" y1="310.50" x2="23" y2="310.50" stroke="#cecece" stroke-width="1"/>
<line x1="23" y1="327.50" x2="1345" y2="327.50" stroke="#e7e7e7" stroke-width="1"/>
<line x1="0" y1="327.50" x2="23" y2="327.50" stroke="#cecece" stroke-width="1"/>
<line x1="23" y1="344.50" x2="1345" y2="344.50" stroke="#e7e7e7" stroke-width="1"/>
<line x1="0" y1="344.50" x2="23" y2="344.50" stroke="#cecece" stroke-width="1"/>
<line x1="23" y1="361.50" x2="1345" y2="361.50" stroke="#e7e7e7" stroke-width="1"/>
<line x1="0" y1="361.50" x2="23" y2="361.50" stroke="#cecece" stroke-width="1"/>
<line x1="23" y1="378.50" x2="1345" y2="378.50" stroke="#e7e7e7" stroke-width="1"/>
<line x1="0" y1="378.50" x2="23" y2="378.50" stroke="#cecece" stroke-width="1"/>
<line x1="23" y1="396.50" x2="1345" y2="396.50" stroke="#e7e7e7" stroke-width="1"/>
<line x1="0" y1="396.50" x2="23" y2="396.50" stroke="#cecece" stroke-width="1"/>
<line x1="23" y1="413.50" x2="1345" y2="413.50" stroke="#e7e7e7" stroke-width="1"/>
<line x1="0" y1="413.50" x2="23" y2="413.50" stroke="#cecece" stroke-width="1"/>
<line x1="23" y1="430.50" x2="1345" y2="430.50" stroke="#e7e7e7" stroke-width="1"/>
<line x1="0" y1="430.50" x2="23" y2="430.50" stroke="#cecece" stroke-width="1"/>
<line x1="23" y1="447.50" x2="1345" y2="447.50" stroke="#e7e7e7" stroke-width="1"/>
<line x1="0" y1="447.50" x2="23" y2="447.50" stroke="#cecece" stroke-width="1"/>
<line x1="23" y1="464.50" x2="1345" y2="464.50" stroke="#e7e7e7" stroke-width="1"/>
<line x1="0" y1="464.50" x2="23" y2="464.50" stroke="#cecece" stroke-width="1"/>
<line x1="23" y1="481.50" x2="1345" y2="481.50" stroke="#e7e7e7" stroke-width="1"/>
<line x1="0" y1="481.50" x2="23" y2="481.50" stroke="#cecece" stroke-width="1"/>
<line x1="23" y1="498.50" x2="1345" y2="498.50" stroke="#e7e7e7" stroke-width="1"/>
<line x1="0" y1="498.50" x2="23" y2="498.50" stroke="#cecece" stroke-width="1"/>
<line x1="23" y1="515.50" x2="1345" y2="515.50" stroke="#e7e7e7" stroke-width="1"/>
<line x1="0" y1="515.50" x2="23" y2="515.50" stroke="#cecece" stroke-width="1"/>
<line x1="23" y1="532.50" x2="1345" y2="532.50" stroke="#e7e7e7" stroke-width="1"/>
<line x1="0" y1="532.50" x2="23" y2="532.50" stroke="#cecece" stroke-width="1"/>
<line x1="23" y1="549.50" x2="1345" y2="549.50" stroke="#e7e7e7" stroke-width="1"/>
<line x1="0" y1="549.50" x2="23" y2="549.50" stroke="#cecece" stroke-width="1"/>
<line x1="23" y1="566.50" x2="1345" y2="566.50" stroke="#e7e7e7" stroke-width="1"/>
<line x1="0" y1="566.50" x2="23" y2="566.50" stroke="#cecece" stroke-width="1"/>
<line x1="23" y1="583.50" x2="1345" y2="583.50" stroke="#e7e7e7" stroke-width="1"/>
<line x1="0" y1="583.50" x2="23" y2="583.50" stroke="#cecece" stroke-width="1"/>
<line x1="23" y1="600.50" x2="1345" y2="600.50" stroke="#e7e7e7" stroke-width="1"/>
<line x1="0" y1="600.50" x2="23" y2="600.50" stroke="#cecece" stroke-width="1"/>
<line x1="23" y1="617.50" x2="1345" y2="617.50" stroke="#e7e7e7" stroke-width="1"/>
<line x1="0" y1="617.50" x2="23" y2="617.50" stroke="#cecece" stroke-width="1"/>
<line x1="23" y1="634.50" x2="1345" y2="634.50" stroke="#e7e7e7" stroke-width="1"/>
<line x1="0" y1="634.50" x2="23" y2="634.50" stroke="#cecece" stroke-width="1"/>
<line x1="23" y1="651.50" x2="1345" y2="651.50" stroke="#e7e7e7" stroke-width="1"/>
<line x1="0" y1="651.50" x2="23" y2="651.50" stroke="#cecece" stroke-width="1"/>
<line x1="23" y1="668.50" x2="1345" y2="668.50" stroke="#e7e7e7" stroke-width="1"/>
<line x1="0" y1="668.50" x2="23" y2="668.50" stroke="#cecece" stroke-width="1"/>
<line x1="0" y1="208.5" x2="1345" y2="208.5" stroke="#bdbdbd" stroke-width="1"/>
<line x1="23.5" y1="193" x2="23.5" y2="677" stroke="#bdbdbd" stroke-width="1"/>
<polygon points="10,206 21,206 21,195" fill="#c4c4c4"/>
<rect x="23.8" y="209" width="56.6" height="16.6" fill="none" stroke="#1f6e43" stroke-width="1.8"/>
<rect x="78.5" y="223.5" width="4" height="4" fill="#1f6e43" stroke="#fff" stroke-width="0.8"/>
</svg>
<div class="t" style="left:31.7px;top:195px;width:40px;text-align:center;font-size:12px;color:#333">A</div>
<div class="t" style="left:88.6px;top:195px;width:40px;text-align:center;font-size:12px;color:#333">B</div>
<div class="t" style="left:145.4px;top:195px;width:40px;text-align:center;font-size:12px;color:#333">C</div>
<div class="t" style="left:202.3px;top:195px;width:40px;text-align:center;font-size:12px;color:#333">D</div>
<div class="t" style="left:259.1px;top:195px;width:40px;text-align:center;font-size:12px;color:#333">E</div>
<div class="t" style="left:316.0px;top:195px;width:40px;text-align:center;font-size:12px;color:#333">F</div>
<div class="t" style="left:372.8px;top:195px;width:40px;text-align:center;font-size:12px;color:#333">G</div>
<div class="t" style="left:429.7px;top:195px;width:40px;text-align:center;font-size:12px;color:#333">H</div>
<div class="t" style="left:486.5px;top:195px;width:40px;text-align:center;font-size:12px;color:#333">I</div>
<div class="t" style="left:543.4px;top:195px;width:40px;text-align:center;font-size:12px;color:#333">J</div>
<div class="t" style="left:600.2px;top:195px;width:40px;text-align:center;font-size:12px;color:#333">K</div>
<div class="t" style="left:657.1px;top:195px;width:40px;text-align:center;font-size:12px;color:#333">L</div>
<div class="t" style="left:713.9px;top:195px;width:40px;text-align:center;font-size:12px;color:#333">M</div>
<div class="t" style="left:770.8px;top:195px;width:40px;text-align:center;font-size:12px;color:#333">N</div>
<div class="t" style="left:827.6px;top:195px;width:40px;text-align:center;font-size:12px;color:#333">O</div>
<div class="t" style="left:884.5px;top:195px;width:40px;text-align:center;font-size:12px;color:#333">P</div>
<div class="t" style="left:941.3px;top:195px;width:40px;text-align:center;font-size:12px;color:#333">Q</div>
<div class="t" style="left:998.2px;top:195px;width:40px;text-align:center;font-size:12px;color:#333">R</div>
<div class="t" style="left:1055.0px;top:195px;width:40px;text-align:center;font-size:12px;color:#333">S</div>
<div class="t" style="left:1111.9px;top:195px;width:40px;text-align:center;font-size:12px;color:#333">T</div>
<div class="t" style="left:1168.7px;top:195px;width:40px;text-align:center;font-size:12px;color:#333">U</div>
<div class="t" style="left:1225.6px;top:195px;width:40px;text-align:center;font-size:12px;color:#333">V</div>
<div class="t" style="left:1282.4px;top:195px;width:40px;text-align:center;font-size:12px;color:#333">W</div>
<div class="t" style="left:0;top:211.2px;width:22px;text-align:center;font-size:12px;color:#333">1</div>
<div class="t" style="left:0;top:228.2px;width:22px;text-align:center;font-size:12px;color:#333">2</div>
<div class="t" style="left:0;top:245.3px;width:22px;text-align:center;font-size:12px;color:#333">3</div>
<div class="t" style="left:0;top:262.3px;width:22px;text-align:center;font-size:12px;color:#333">4</div>
<div class="t" style="left:0;top:279.3px;width:22px;text-align:center;font-size:12px;color:#333">5</div>
<div class="t" style="left:0;top:296.4px;width:22px;text-align:center;font-size:12px;color:#333">6</div>
<div class="t" style="left:0;top:313.4px;width:22px;text-align:center;font-size:12px;color:#333">7</div>
<div class="t" style="left:0;top:330.4px;width:22px;text-align:center;font-size:12px;color:#333">8</div>
<div class="t" style="left:0;top:347.5px;width:22px;text-align:center;font-size:12px;color:#333">9</div>
<div class="t" style="left:0;top:364.5px;width:22px;text-align:center;font-size:12px;color:#333">10</div>
<div class="t" style="left:0;top:381.5px;width:22px;text-align:center;font-size:12px;color:#333">11</div>
<div class="t" style="left:0;top:398.5px;width:22px;text-align:center;font-size:12px;color:#333">12</div>
<div class="t" style="left:0;top:415.6px;width:22px;text-align:center;font-size:12px;color:#333">13</div>
<div class="t" style="left:0;top:432.6px;width:22px;text-align:center;font-size:12px;color:#333">14</div>
<div class="t" style="left:0;top:449.6px;width:22px;text-align:center;font-size:12px;color:#333">15</div>
<div class="t" style="left:0;top:466.7px;width:22px;text-align:center;font-size:12px;color:#333">16</div>
<div class="t" style="left:0;top:483.7px;width:22px;text-align:center;font-size:12px;color:#333">17</div>
<div class="t" style="left:0;top:500.7px;width:22px;text-align:center;font-size:12px;color:#333">18</div>
<div class="t" style="left:0;top:517.8px;width:22px;text-align:center;font-size:12px;color:#333">19</div>
<div class="t" style="left:0;top:534.8px;width:22px;text-align:center;font-size:12px;color:#333">20</div>
<div class="t" style="left:0;top:551.8px;width:22px;text-align:center;font-size:12px;color:#333">21</div>
<div class="t" style="left:0;top:568.8px;width:22px;text-align:center;font-size:12px;color:#333">22</div>
<div class="t" style="left:0;top:585.9px;width:22px;text-align:center;font-size:12px;color:#333">23</div>
<div class="t" style="left:0;top:602.9px;width:22px;text-align:center;font-size:12px;color:#333">24</div>
<div class="t" style="left:0;top:619.9px;width:22px;text-align:center;font-size:12px;color:#333">25</div>
<div class="t" style="left:0;top:637.0px;width:22px;text-align:center;font-size:12px;color:#333">26</div>
<div class="t" style="left:0;top:654.0px;width:22px;text-align:center;font-size:12px;color:#333">27</div>
<div class="t" style="left:0;top:671.0px;width:22px;text-align:center;font-size:12px;color:#333">28</div>
<div class="a" style="left:1345px;top:192px;width:18px;height:485px;background:#f8f9f9;border-left:1px solid #e2e2e2"></div>
<div class="a" style="left:1351px;top:207px;width:7.5px;height:447px;background:#6e6e6e;border-radius:4px"></div>
<svg class="a" style="left:0;top:0" width="1363" height="720"><polygon points="1351,203 1359,203 1355,196" fill="#606060"/><polygon points="1351,668 1359,668 1355,675" fill="#606060"/></svg>
<!-- SHEET BAR -->
<div class="a" style="left:0;top:677px;width:1363px;height:29px;background:#deeaea"></div>
<div class="a" style="left:100px;top:677px;width:52px;height:25px;background:#fff;border-radius:0 0 3px 3px"></div>
<div class="t" style="left:107px;top:683px;font-size:11.2px;font-weight:bold;color:#1f1f1f">Sheet1</div>
<div class="a" style="left:107px;top:698px;width:37px;height:2px;background:#1d6b3f"></div>
<div class="a" style="left:155px;top:683px;width:1px;height:15px;background:#c9d3d3"></div>
<!-- STATUS BAR -->
<div class="a" style="left:0;top:706px;width:1363px;height:14px;background:#f3f2f1"></div>
<div class="t" style="left:10px;top:711.3px;font-size:9.4px;color:#333">Ready</div>
<div class="t" style="left:69.5px;top:711.3px;font-size:9.4px;color:#333">Accessibility: Good to go</div>
<div class="t" style="left:1333.5px;top:711.3px;font-size:9.4px;color:#333">100%</div>
<svg class="a" style="left:0;top:0" width="1363" height="720"><rect x="17.5" y="14.5" width="10.5" height="14" rx="1.2" fill="none" stroke="#dff2e6" stroke-width="1.6"/><path d="M22.5,14.5 V28.5 M17.5,19.5 H28 M17.5,24 H28" stroke="#dff2e6" stroke-width="1.2"/><rect x="13.5" y="18" width="8" height="8" rx="1" fill="#dff2e6"/><path d="M15.5,20 L19.5,24 M19.5,20 L15.5,24" stroke="#137c45" stroke-width="1"/><rect x="43" y="14.5" width="13.5" height="13.5" rx="1.5" fill="none" stroke="#dff2e6" stroke-width="1.5"/><rect x="46" y="14.5" width="7.5" height="4.5" fill="none" stroke="#dff2e6" stroke-width="1.3"/><rect x="46" y="22" width="7.5" height="6" fill="none" stroke="#dff2e6" stroke-width="1.3"/><path d="M69,18 L73,14.5 M69,18 L73,21.5 M69.5,18 L75,18 Q80,18 80,23 Q80,26 76,29" fill="none" stroke="#69b58a" stroke-width="1.4"/><polyline points="88.0,19.3 90.3,21.7 92.5,19.3" fill="none" stroke="#69b58a" stroke-width="1"/><path d="M114,18 L110,14.5 M114,18 L110,21.5 M113.5,18 L108,18 Q103,18 103,23 Q103,26 107,29" fill="none" stroke="#69b58a" stroke-width="1.4"/><polyline points="121.5,19.3 123.8,21.7 126.0,19.3" fill="none" stroke="#69b58a" stroke-width="1"/><path d="M139,18.5 H145" stroke="#dff2e6" stroke-width="1.1"/><polyline points="139.2,21.0 142.0,24.0 144.8,21.0" fill="none" stroke="#dff2e6" stroke-width="1.4"/><circle cx="546.5" cy="18.5" r="4.3" fill="none" stroke="#3d6a52" stroke-width="1.2"/><path d="M543.5,21.8 L538.5,26.5" stroke="#3d6a52" stroke-width="1.3"/><path d="M1252,20.5 H1262" stroke="#d2efdc" stroke-width="1.6"/><rect x="1295" y="18" width="7.5" height="7.5" rx="1.5" fill="none" stroke="#d2efdc" stroke-width="1.5"/><path d="M1297.5,16 H1303 Q1305,16 1305,18 V23" fill="none" stroke="#d2efdc" stroke-width="1.5"/><path d="M1337.5,16 L1347,25.5 M1347,16 L1337.5,25.5" stroke="#d2efdc" stroke-width="1.5"/><path d="M1298,52.5 L1293.5,52.5 L1293.5,61.5 L1302,61.5 L1302,59" fill="none" stroke="#fff" stroke-width="1.1"/><path d="M1296,58.5 Q1296.5,53.5 1300.5,53.5 L1300.5,51 L1304,54.5 L1300.5,58 L1300.5,55.5 Q1298,55.5 1296,58.5 Z" fill="none" stroke="#fff" stroke-width="1"/><polyline points="1345.0,54.7 1347.5,57.3 1350.0,54.7" fill="none" stroke="#fff" stroke-width="1.1"/><polyline points="84.0,174.5 88.0,178.5 92.0,174.5" fill="none" stroke="#333" stroke-width="1.3"/><circle cx="106.5" cy="171.5" r="1.1" fill="#333"/><circle cx="106.5" cy="176" r="1.1" fill="#333"/><circle cx="106.5" cy="180.5" r="1.1" fill="#333"/><path d="M121.5,171 L131,180.5 M131,171 L121.5,180.5" stroke="#b0b0b0" stroke-width="1"/><path d="M141,177 L145,181 L154,172" fill="none" stroke="#b0b0b0" stroke-width="1"/><polyline points="1344.0,173.0 1348.0,177.0 1352.0,173.0" fill="none" stroke="#444" stroke-width="1.2"/><polyline points="27,686 23,690.5 27,695" fill="none" stroke="#9aa" stroke-width="1.1"/><polyline points="52,686 56,690.5 52,695" fill="none" stroke="#9aa" stroke-width="1.1"/><path d="M197.5,684.5 V696.5 M191.5,690.5 H203.5" stroke="#333" stroke-width="1.2"/><circle cx="820.8" cy="687.6" r="1.15" fill="#222"/><circle cx="820.8" cy="691.3" r="1.15" fill="#222"/><circle cx="820.8" cy="695" r="1.15" fill="#222"/><polygon points="846,686.5 846,694.5 841,690.5" fill="#666"/><rect x="850" y="686.5" width="466" height="8" rx="4" fill="#6e6e6e"/><polygon points="1337,686 1337,695 1343,690.5" fill="#555"/><rect x="1099" y="706" width="35" height="14" fill="#e2e2e2"/><path d="M1110,709.5 H1122 M1110,713.5 H1122 M1110,717.5 H1122 M1110.5,709 V720 M1114.5,709 V720 M1118.5,709 V720 M1121.5,709 V720" stroke="#333" stroke-width="1"/><rect x="1145.5" y="709.5" width="12" height="12" fill="none" stroke="#444" stroke-width="1"/><rect x="1148.5" y="712.5" width="6" height="9" fill="none" stroke="#444" stroke-width="1"/><path d="M1181.5,721 V709.5 H1193.5 V721 M1185.5,709.5 V715.5 H1189.5 V709.5" fill="none" stroke="#444" stroke-width="1"/><path d="M1209.5,715.5 H1217 M1313,715.5 H1322 M1317.5,711 V720" stroke="#555" stroke-width="1"/><path d="M1222,715.5 H1310" stroke="#777" stroke-width="0.9"/><rect x="1264.5" y="710" width="3.5" height="10" fill="#555"/><circle cx="59" cy="711" r="2" fill="none" stroke="#444" stroke-width="0.9"/><path d="M54,714 H64 M59,713 V717 L56.5,720 M59,717 L61,719" fill="none" stroke="#444" stroke-width="0.9"/><path d="M62,717.5 L64,719.5 L67,715" fill="none" stroke="#444" stroke-width="0.9"/></svg>
<div class="t" style="left:162.0px;top:169.5px;font-size:13px;color:#333;font-weight:normal;font-family:Liberation Serif,serif"><i>f</i><i style="font-size:11px">x</i></div><div class="a" style="left:642px;top:98px;width:182px;height:458.5px;background:#fff;border:1px solid #a8a8a8;border-radius:0 0 5px 5px;box-shadow:0 3px 8px rgba(0,0,0,0.18)"></div><svg class="a" style="left:0;top:0" width="1363" height="720"><rect x="809" y="477" width="11" height="51" fill="#f2f2f2"/><rect x="812" y="99" width="7.8" height="378" fill="#6b6b6b"/><polygon points="811.5,517 820.5,517 816,523.5" fill="#555"/><line x1="644" y1="529.5" x2="822" y2="529.5" stroke="#e0e0e0" stroke-width="1"/><line x1="675" y1="548" x2="685" y2="548" stroke="#3a3a3a" stroke-width="0.9"/><circle cx="664.5" cy="118" r="7.5" fill="none" stroke="#5b9bb8" stroke-width="1.1"/><path d="M664.5,113 V118 H668" fill="none" stroke="#333" stroke-width="1"/><rect x="659" y="122.5" width="24" height="14" fill="#fff"/><path d="M660.8,127.02 L663.8,124.60 V135.60" fill="none" stroke="#3c3c3c" stroke-width="1.1"/><path d="M666.64,127.02 Q667.32,124.60 669.90,124.60 Q672.96,124.60 672.96,127.57 Q672.96,129.55 670.24,132.08 L666.50,135.60 H673.30" fill="none" stroke="#3c3c3c" stroke-width="1.1"/><path d="M675.35,125.70 Q677.10,124.60 678.50,124.60 Q681.44,124.60 681.44,127.35 Q681.44,129.77 677.94,129.88 Q682.00,130.10 682.00,132.74 Q682.00,135.60 678.36,135.60 Q676.40,135.60 675.00,134.50" fill="none" stroke="#3c3c3c" stroke-width="1.1"/><path d="M659.6,161.87 L663.9,158.50 V173.80" fill="none" stroke="#3c3c3c" stroke-width="1.2"/><path d="M669.49,161.87 Q670.45,158.50 674.10,158.50 Q678.42,158.50 678.42,162.63 Q678.42,165.38 674.58,168.90 L669.30,173.80 H678.90" fill="none" stroke="#3c3c3c" stroke-width="1.2"/><rect x="656.5" y="201" width="25" height="15" fill="#fff" stroke="#555" stroke-width="1.3"/><path d="M661,204 h-2 v9 h2 M677,204 h2 v9 h-2" fill="none" stroke="#555" stroke-width="1"/><ellipse cx="668.5" cy="208.5" rx="3.8" ry="5" fill="none" stroke="#555" stroke-width="1.2"/><path d="M671.5,218.5 v3 a5.5,2.2 0 0 0 11,0 v-3" fill="#f6d58e" stroke="#dca24a" stroke-width="0.9"/><path d="M671.5,215.3 v3 a5.5,2.2 0 0 0 11,0 v-3" fill="#f6d58e" stroke="#dca24a" stroke-width="0.9"/><path d="M671.5,212.1 v3 a5.5,2.2 0 0 0 11,0 v-3" fill="#f6d58e" stroke="#dca24a" stroke-width="0.9"/><ellipse cx="677" cy="212.1" rx="5.5" ry="2.2" fill="#f8e0a8" stroke="#dca24a" stroke-width="0.9"/><rect x="660.5" y="237.5" width="16" height="26" rx="1" fill="#fff" stroke="#3c3c3c" stroke-width="1.1"/><rect x="663" y="241" width="11" height="3.5" fill="#ddd" stroke="#666" stroke-width="0.9"/><rect x="662.8" y="248.0" width="2.6" height="2.6" rx="0.6" fill="#222"/><rect x="667.2" y="248.0" width="2.6" height="2.6" rx="0.6" fill="#222"/><rect x="671.6" y="248.0" width="2.6" height="2.6" rx="0.6" fill="#222"/><rect x="662.8" y="253.0" width="2.6" height="2.6" rx="0.6" fill="#222"/><rect x="667.2" y="253.0" width="2.6" height="2.6" rx="0.6" fill="#222"/><rect x="671.6" y="253.0" width="2.6" height="2.6" rx="0.6" fill="#222"/><rect x="662.8" y="258.0" width="2.6" height="2.6" rx="0.6" fill="#222"/><rect x="667.2" y="258.0" width="2.6" height="2.6" rx="0.6" fill="#222"/><rect x="671.6" y="258.0" width="2.6" height="2.6" rx="0.6" fill="#222"/><path d="M672.0,261.5 v3 a5.5,2.2 0 0 0 11,0 v-3" fill="#f6d58e" stroke="#dca24a" stroke-width="0.9"/><path d="M672.0,258.3 v3 a5.5,2.2 0 0 0 11,0 v-3" fill="#f6d58e" stroke="#dca24a" stroke-width="0.9"/><path d="M672.0,255.1 v3 a5.5,2.2 0 0 0 11,0 v-3" fill="#f6d58e" stroke="#dca24a" stroke-width="0.9"/><ellipse cx="677.5" cy="255.1" rx="5.5" ry="2.2" fill="#f8e0a8" stroke="#dca24a" stroke-width="0.9"/><rect x="656.5" y="283.5" width="25" height="22" fill="#fff" stroke="#505050" stroke-width="1.2"/><path d="M656.5,288.5 H681.5" stroke="#505050" stroke-width="1.1"/><path d="M661.5,281.0 V286.0 M676.5,281.0 V286.0" stroke="#505050" stroke-width="1.1"/><rect x="664.5" y="296.0" width="2" height="2" fill="#333"/><rect x="656.5" y="326" width="25" height="22" fill="#fff" stroke="#505050" stroke-width="1.2"/><path d="M656.5,331 H681.5" stroke="#505050" stroke-width="1.1"/><path d="M661.5,323.5 V328.5 M676.5,323.5 V328.5" stroke="#505050" stroke-width="1.1"/><rect x="664.5" y="338.5" width="2" height="2" fill="#333"/><circle cx="669" cy="378.7" r="12.2" fill="none" stroke="#505050" stroke-width="1.2"/><path d="M668.5,371 V380 H675.5" fill="none" stroke="#3c3c3c" stroke-width="1.1"/><circle cx="663" cy="414.5" r="4" fill="none" stroke="#3c3c3c" stroke-width="1.1"/><circle cx="675" cy="426" r="4.3" fill="none" stroke="#3c3c3c" stroke-width="1.1"/><path d="M659.5,433 L678.5,410.5" stroke="#3c3c3c" stroke-width="1.1"/><path d="M661,456 L665.5,453 V466" fill="none" stroke="#3c3c3c" stroke-width="1.1"/><path d="M662,475.5 L675.5,453" stroke="#3c3c3c" stroke-width="1.1"/><path d="M670.5,465.5 Q671,462.5 674.5,462.5 Q678,462.5 678,465.5 Q678,467.5 675,470 L670.5,475 H679" fill="none" stroke="#3c3c3c" stroke-width="1.1"/><path d="M656.5,502.48 L662.1,499.00 V514.80" fill="none" stroke="#3c3c3c" stroke-width="1.2"/><ellipse cx="670.30" cy="506.90" rx="4.70" ry="7.90" fill="none" stroke="#3c3c3c" stroke-width="1.2"/><path d="M676.5,496.5 Q677,494 679.3,494 Q681.8,494 681.8,496.3 Q681.8,498 679.5,500 L676.5,503 H682.3" fill="none" stroke="#3c3c3c" stroke-width="1"/></svg>
<div class="t" style="left:631.5px;top:537.8px;width:200px;text-align:center;font-size:10.5px;color:#3a3a3a;font-weight:normal;">More Number Formats...</div>
<div class="t" style="left:695.5px;top:112.0px;font-size:10.3px;color:#1e1e1e;font-weight:bold;">General</div>
<div class="t" style="left:695.5px;top:154.6px;font-size:10.3px;color:#1e1e1e;font-weight:bold;">Number</div>
<div class="t" style="left:695.5px;top:197.2px;font-size:10.3px;color:#1e1e1e;font-weight:bold;">Currency</div>
<div class="t" style="left:695.5px;top:239.8px;font-size:10.3px;color:#1e1e1e;font-weight:bold;">Accounting</div>
<div class="t" style="left:695.5px;top:282.4px;font-size:10.3px;color:#1e1e1e;font-weight:bold;">Short Date</div>
<div class="t" style="left:695.5px;top:324.9px;font-size:10.3px;color:#1e1e1e;font-weight:bold;">Long Date</div>
<div class="t" style="left:695.5px;top:367.5px;font-size:10.3px;color:#1e1e1e;font-weight:bold;">Time</div>
<div class="t" style="left:695.5px;top:410.1px;font-size:10.3px;color:#1e1e1e;font-weight:bold;">Percentage</div>
<div class="t" style="left:695.5px;top:452.7px;font-size:10.3px;color:#1e1e1e;font-weight:bold;">Fraction</div>
<div class="t" style="left:695.5px;top:495.3px;font-size:10.3px;color:#1e1e1e;font-weight:bold;">Scientific</div>
<div class="t" style="left:695.5px;top:126.7px;font-size:11px;color:#444;font-weight:normal;">No specific format</div><div class="a" style="left:640px;top:98px;width:180px;height:51px;border:7px solid #8c3fd0"></div><div class="a" style="left:45.5px;top:39px;width:61px;height:41px;border:7px solid #8c3fd0"></div>
</body></html>
